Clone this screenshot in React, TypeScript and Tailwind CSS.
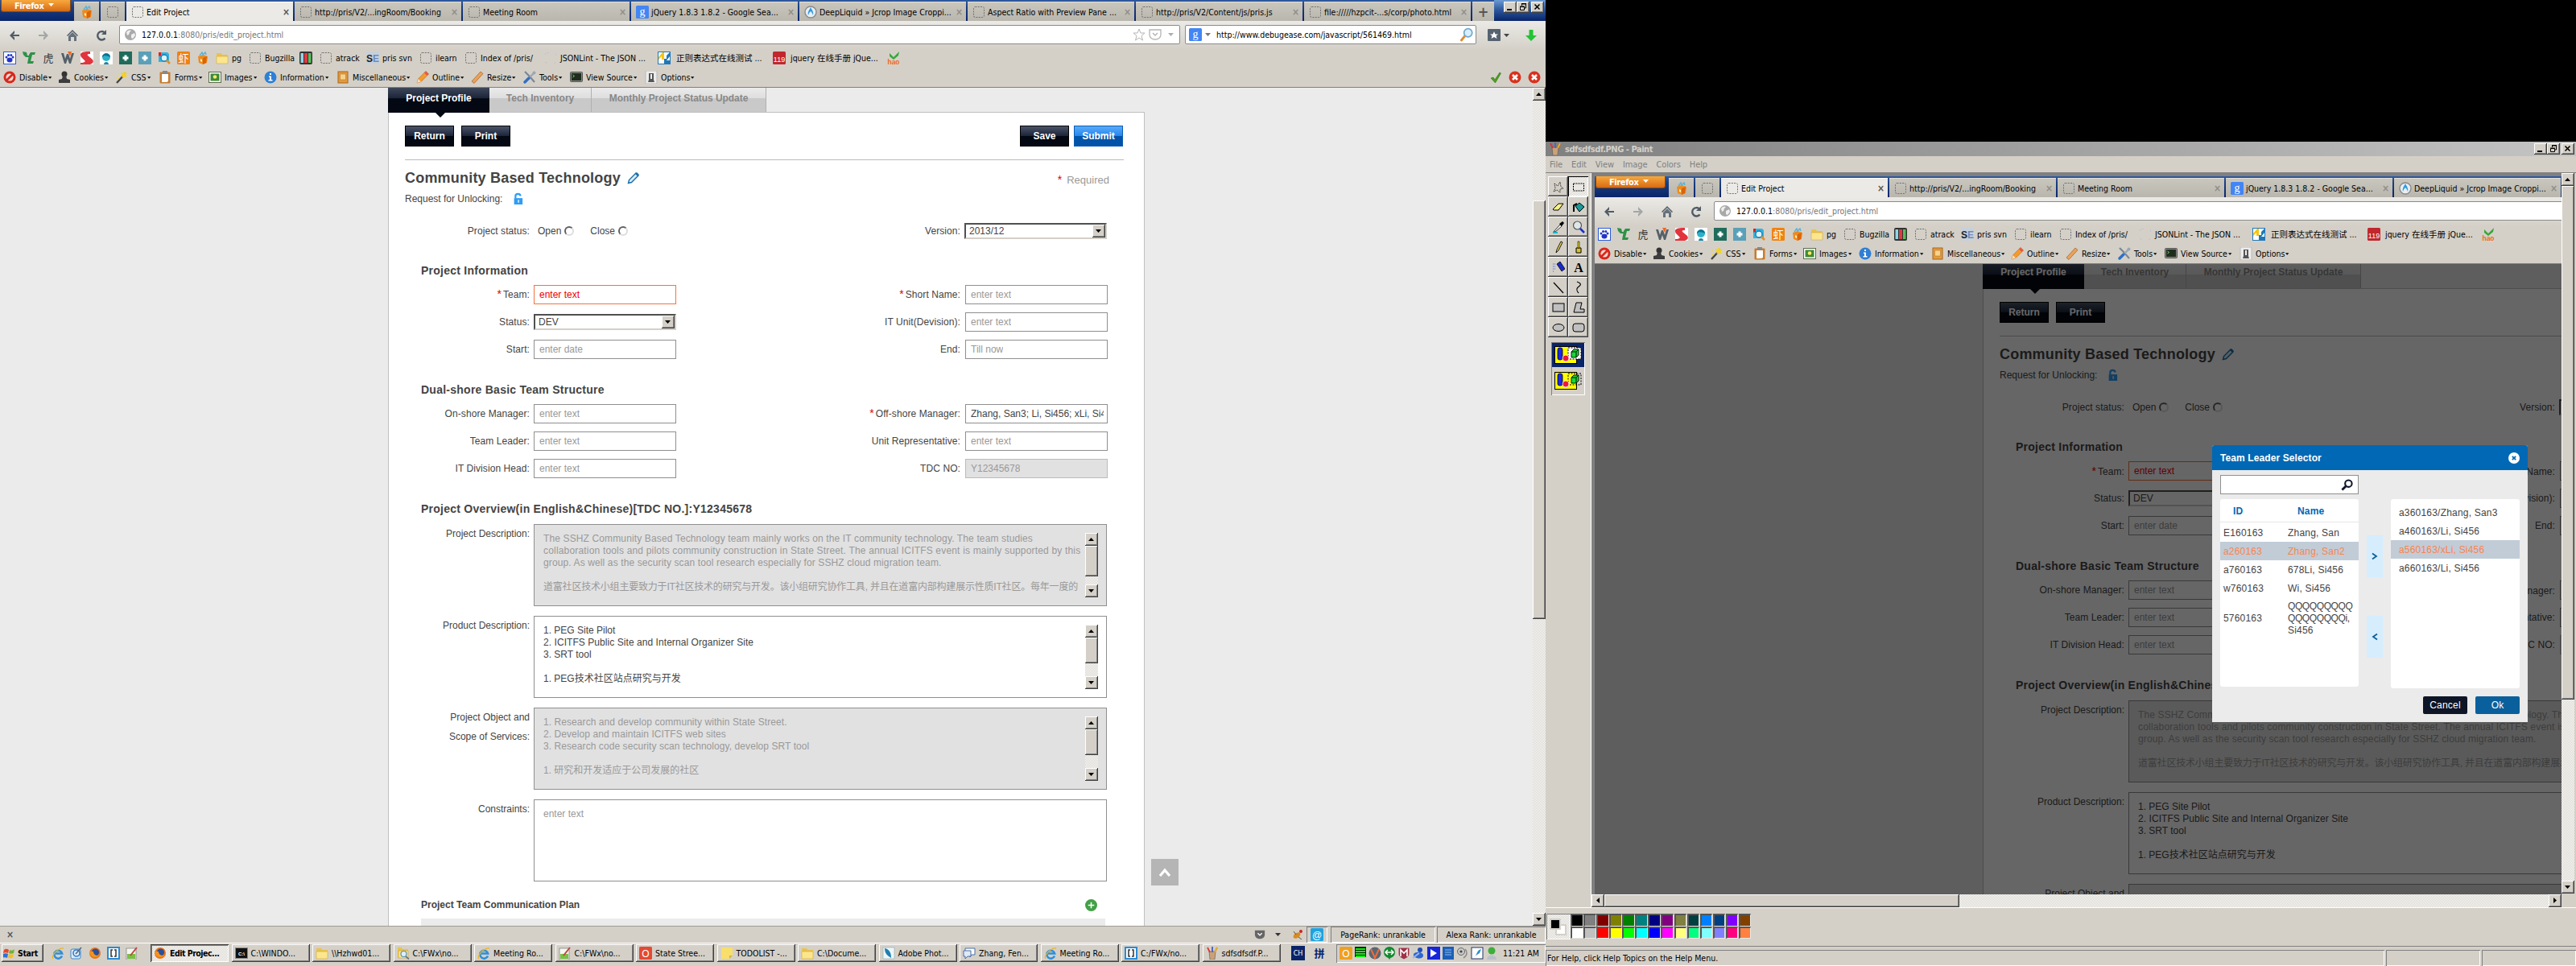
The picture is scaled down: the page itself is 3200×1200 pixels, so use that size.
import React from "react";

const ui = "font-['DejaVu_Sans_Condensed','DejaVu_Sans','Noto_Sans_CJK_SC',sans-serif] [font-stretch:condensed]";
const arial = "font-['Liberation_Sans','Noto_Sans_CJK_SC',sans-serif]";
const raised = "bg-[#d4d0c8] shadow-[inset_-1px_-1px_0_#404040,inset_1px_1px_0_#ffffff,inset_-2px_-2px_0_#808080]";
const sunken = "shadow-[inset_1px_1px_0_#808080,inset_-1px_-1px_0_#ffffff]";
const checker = "bg-[#eae8e4] bg-[repeating-conic-gradient(#d4d0c8_0_25%,#ffffff_0_50%)] bg-[length:2px_2px]";

/* ---------- icons ---------- */

type IconProps = { children: React.ReactNode; className?: string };
const I = ({ children, className = "size-4" }: IconProps) => (
  <svg viewBox="0 0 16 16" className={"shrink-0 " + className}>{children}</svg>
);

const Dashed = ({ faint = false }: { faint?: boolean }) => (
  <I><rect x="1.5" y="1.5" width="13" height="13" rx="2" fill="none" stroke={faint ? "#b9bfd0" : "#6f6f6f"} strokeDasharray={faint ? "2 9" : "2 1.3"} /></I>
);
const Google = () => (
  <I><rect width="16" height="16" rx="1.5" fill="#4285f4" /><text x="8" y="12" fontSize="14" textAnchor="middle" fill="#fff" fontFamily="Liberation Serif">g</text></I>
);
const Drop = () => (
  <I><circle cx="8" cy="8" r="7" fill="#e8eef2" stroke="#8a8a8a" strokeWidth="1.4" /><path d="M8 2c2 4 4 6 3 10-1-3-2-4-3-5-1 1-2 2-3 5-1-4 1-6 3-10z" fill="#2e9be0" /></I>
);
const BoxFox = () => (
  <I><path d="M2 6l6-2 6 2-1 8-5 2-5-2z" fill="#f08a1c" /><path d="M8 8l5-2-1 8-4 2z" fill="#d9640a" /><path d="M4 5l3-4 1 3 3-3 1 3" fill="none" stroke="#5fb4dc" strokeWidth="1.6" /><path d="M5 9l2 1v3l-2-1z" fill="#fff2c0" /></I>
);
const Globe = () => (
  <I><circle cx="8" cy="8" r="7" fill="#a9a9a9" /><path d="M3 5c2-3 5-3 6-2l-2 2-1 3-2 1zM9 8l4-2 1 3-3 4-2-1z" fill="#f0f0f0" /></I>
);
const Arrow = ({ right = false }: { right?: boolean }) => (
  <I><path d={right ? "M8 2l6 6-6 6v-3.500l2-1.500H2V7h8L8 5.500z" : "M8 2L2 8l6 6v-3.500L6 9h8V7H6l2-1.500z"} fill={right ? "#a3a6a8" : "#4f5b66"} /></I>
);
const Home = () => (
  <I><path d="M8 1L1 8l1 1 6-6 6 6 1-1z" fill="#4f5b66" /><path d="M3 9l5-5 5 5v6h-3v-5H6v5H3z" fill="#65717c" /></I>
);
const Reload = () => (
  <I><path d="M12.500 11.500A5.200 5.200 0 1 1 12 4.500" fill="none" stroke="#4f5b66" strokeWidth="2.400" /><path d="M14 1v6H8z" fill="#4f5b66" /></I>
);
const Paw = () => (
  <I><rect x=".5" y=".5" width="15" height="15" fill="#fff" stroke="#2a5bd7" /><ellipse cx="8" cy="10.500" rx="3.500" ry="3" fill="#2334c8" /><circle cx="4" cy="7" r="1.500" fill="#2334c8" /><circle cx="6.500" cy="4.500" r="1.500" fill="#2334c8" /><circle cx="9.800" cy="4.500" r="1.500" fill="#2334c8" /><circle cx="12" cy="7" r="1.500" fill="#2334c8" /></I>
);
const GreenMark = () => (
  <I><path d="M0 0l5 1 1 4 3 0-1 2-4 0-3-3zM8 4l2-3h6l-1 3h-3l-2 8 4 0-1 3H6z" fill="#2e9148" /></I>
);
const Glyph = ({ ch, bg, fg = "#fff", size = 13 }: { ch: string; bg: string; fg?: string; size?: number }) => (
  <I><rect width="16" height="16" rx="1.500" fill={bg} /><text x="8" y="12.700" fontSize={size} textAnchor="middle" fill={fg} fontFamily="Liberation Sans, Noto Sans CJK SC">{ch}</text></I>
);
const WMark = () => (
  <I><path d="M0 2h3l2 7 2-6h2l2 6 2-7h3l-4 13H10L8 9l-2 6H4z" fill="#566069" /><path d="M8 0h5l-2 6z" fill="#f26522" /></I>
);
const SMark = () => (
  <I><rect width="16" height="16" fill="#fff" /><path d="M0 3C2 0 6 0 12 0v3C9 3 8 4 9 5l6 5c2 3 0 5-3 6H0v-2c4 0 7-1 5-3L1 7C0 6 0 4 0 3z" fill="#e1343d" /></I>
);
const Head = () => (
  <I><rect width="16" height="16" fill="#fff" /><circle cx="8" cy="7" r="5" fill="#2cb2c8" /><path d="M3 7c0-6 10-6 10 0l-2-1-5-1z" fill="#0d6f8d" /><path d="M5 16c0-4 6-4 6 0z" fill="#1b87a4" /></I>
);
const Plus = ({ c }: { c: string }) => (
  <I><rect width="16" height="16" fill={c} /><path d="M6.500 4.500h3v2h2v3h-2v2h-3v-2h-2v-3h2z" fill="#fff" /></I>
);
const BookLens = () => (
  <I><path d="M1 1h11l2 2v10H1z" fill="#33b2e0" /><path d="M1 1h3v5L2.500 5 1 6z" fill="#d22" /><circle cx="8" cy="8" r="4" fill="#dff4ff" stroke="#0b7fb0" strokeWidth="1.300" /><path d="M11 11l4 4" stroke="#f08a1c" strokeWidth="2.500" /></I>
);
const Folder = () => (
  <I><path d="M1 2h6l1 2h7v11H1z" fill="#e9c34f" /><path d="M1 6h14v9H1z" fill="#fbe68d" stroke="#d5a93a" strokeWidth=".6" /></I>
);
const FolderLens = () => (
  <I><path d="M1 1h5l1 2h7v11H1z" fill="#e9c34f" /><path d="M2 5h12v9H2z" fill="#fbe68d" stroke="#c99a2a" strokeWidth=".6" /><circle cx="8.500" cy="9" r="3.500" fill="#d9f0ff" stroke="#5b8fb5" strokeWidth="1.200" /><path d="M11 12l4 3.500" stroke="#6d7680" strokeWidth="1.800" /></I>
);
const Bars = () => (
  <I><rect width="16" height="16" rx="2" fill="#333" /><rect x="1.500" y="2" width="3.500" height="12" fill="#8fd7e8" /><rect x="6" y="2" width="4" height="12" fill="#e2383f" /><rect x="11" y="2" width="3.500" height="12" fill="#5bbd5e" /></I>
);
const SE = () => (
  <I><rect width="16" height="16" fill="#c7d0dc" /><text x="0" y="12.500" fontSize="12" fontWeight="700" fill="#222" fontFamily="Liberation Sans">S</text><text x="8" y="12.500" fontSize="12" fontWeight="700" fill="#6b8bbd" fontFamily="Liberation Sans">E</text></I>
);
const Stripe = () => (
  <I><rect x=".5" y=".5" width="15" height="15" fill="#fff" stroke="#1e78b8" /><path d="M1 7l5-6h2v9H5V6L1 10z" fill="#f6c40f" /><path d="M8 15V9h3V5l4-4v5l-4 5h4v4z" fill="#1e78b8" /></I>
);
const Hao = () => (
  <I><path d="M3 2l5 5 7-7-1 5-6 5-5-4z" fill="#35a839" /><text x="8" y="15.500" fontSize="8.500" fontWeight="700" textAnchor="middle" fill="#f26a1b" fontFamily="Liberation Sans">hao</text></I>
);
const NoEntry = () => (
  <I><circle cx="8" cy="8" r="7.500" fill="#d9271c" /><circle cx="8" cy="8" r="4.600" fill="#f2d8d0" /><path d="M3.500 12.500l9-9" stroke="#d9271c" strokeWidth="2.600" /></I>
);
const Stamp = () => (
  <I><circle cx="8" cy="4" r="3.500" fill="#333" /><path d="M6 6h4l1 4 4 1v4H1v-4l4-1z" fill="#3d3d3d" /></I>
);
const Wand = () => (
  <I><path d="M2 15L13 3" stroke="#444" strokeWidth="2.400" /><path d="M11 1l1 2 3 0-2 2 1 3-3-1-2 1 0-3-2-2h3zM3 4l1 1M5 10l-3-1" fill="#f3d22c" stroke="#f3d22c" /></I>
);
const Clip = () => (
  <I><rect x="1.500" y="1.500" width="13" height="14" rx="1" fill="#c77b2f" /><path d="M4 4h8v9l-2 1H4z" fill="#fff" /><rect x="5" y="0" width="6" height="3.500" fill="#888" /></I>
);
const Pic = () => (
  <I><rect x=".5" y="1.500" width="15" height="13" fill="#fff" stroke="#5a6b4b" /><rect x="2.500" y="3.500" width="11" height="9" fill="#3f8a35" /><circle cx="8" cy="7.500" r="2.300" fill="#fbe96b" /></I>
);
const Info = () => (
  <I><circle cx="8" cy="8" r="7.500" fill="#2f7fd6" /><path d="M7 3h2v2H7zM6 6.500h3V11h1.500v1.500h-5V11H7V8H6z" fill="#fff" /></I>
);
const Scroll = () => (
  <I><rect x="2" y="1" width="12" height="14" fill="#e39b3d" stroke="#a9641a" /><path d="M4.500 4h7v7h-7z" fill="#f7d28b" stroke="#b8752a" strokeWidth=".6" /></I>
);
const Pencil = () => (
  <I><path d="M1 15l1.500-5L12 .5 15.500 4 6 13.500z" fill="#f59b2c" stroke="#b55a12" strokeWidth=".6" /><path d="M12 .5L15.500 4l-2 2L10 2.500z" fill="#e4574b" /><path d="M1 15l1.500-5L6 13.500z" fill="#f6dfb5" /></I>
);
const Ruler = () => (
  <I><path d="M1 13L12 1l3 2.500L4 15.500z" fill="#e8a35b" stroke="#b1652a" strokeWidth=".8" /></I>
);
const Tools = () => (
  <I><path d="M2 1l6 6 6 7" stroke="#7a8796" strokeWidth="2.200" fill="none" /><path d="M14 2L6 10" stroke="#9ba6b3" strokeWidth="2.400" /><path d="M7 9l-5 5" stroke="#2f6fc4" strokeWidth="3.400" strokeLinecap="round" /><circle cx="13.500" cy="2.500" r="2" fill="#9ba6b3" /></I>
);
const Term = () => (
  <I><rect x=".5" y="1.500" width="15" height="12" rx="1" fill="#888c84" stroke="#555" /><rect x="2" y="3" width="12" height="9" fill="#1f2d1e" /><path d="M3.500 5l2 1.500-2 1.500" stroke="#6ee25c" fill="none" /></I>
);
const Switch = () => (
  <I><rect x="1" y="0" width="14" height="16" fill="#ececec" stroke="#b9b9b9" /><path d="M5 3h6v8l1 3H4l1-3z" fill="#555" /><path d="M7 4h2v6H7z" fill="#eee" /></I>
);
const Check = () => (
  <I><path d="M2 9l3-1 2 3 6-9 1.500 1-7 12z" fill="#4ba021" stroke="#2f7410" strokeWidth=".6" /></I>
);
const RedX = () => (
  <I><circle cx="8" cy="8" r="7.500" fill="#d8321e" /><path d="M5 5l6 6M11 5l-6 6" stroke="#fff" strokeWidth="2.600" /></I>
);
const IE = () => (
  <I><path d="M13 11.500A5 5 0 1 1 13.200 8.500H4" fill="none" stroke="#2c8fdc" strokeWidth="2.500" /><path d="M2 15C-1 11 9 1 15 2" fill="none" stroke="#f0b323" strokeWidth="1.400" /></I>
);
const FF = () => (
  <I><circle cx="8" cy="8" r="7" fill="#e8741a" /><circle cx="8.500" cy="7" r="4.600" fill="#2a4f9d" /><path d="M1 6c1 8 9 9 13 4-4 2-8 0-8-4z" fill="#f3941e" /></I>
);
const Brackets = () => (
  <I><rect width="16" height="16" fill="#2a8ad4" /><rect x="2" y="2" width="12" height="12" fill="#fff" /><path d="M7 4H5v8h2M9 4h2v8H9" fill="none" stroke="#333" strokeWidth="1.500" /></I>
);
const Notepad = () => (
  <I><rect x="1" y="2" width="12" height="14" fill="#f4f7ef" stroke="#777" strokeWidth=".7" /><path d="M2 9h10v6H2z" fill="#79c142" /><path d="M6 11L14 1" stroke="#c24343" strokeWidth="2" /></I>
);
const Recycle = () => (
  <I><rect x="1" y="3" width="12" height="12" rx="2" fill="#dcebf8" stroke="#3f86cb" /><circle cx="8" cy="8" r="4" fill="none" stroke="#2f7fd0" strokeWidth="1.600" /><path d="M7 9l7-8" stroke="#5a6b7b" strokeWidth="1.600" /></I>
);
const WinFlag = () => (
  <I><path d="M1 4c2-2 4-1 6 0L6 8C4 7 2 7 0 8z" fill="#e8472b" /><path d="M8 4c2 1 4 1 6-1l-1 5c-2 1-4 1-6 0z" fill="#6db33a" /><path d="M0 9c2-1 4-1 6 0l-1 5c-2-1-4-1-6 0z" fill="#2f6fd8" /><path d="M7 9c2 1 4 1 6 0l-1 4c-2 2-4 1-6 1z" fill="#f4c020" /></I>
);
const Cmd = () => (
  <I><rect x=".5" y="1.500" width="15" height="13" fill="#111" stroke="#888" /><text x="8" y="10.500" fontSize="6" textAnchor="middle" fill="#fff" fontWeight="700" fontFamily="Liberation Sans">C:\</text></I>
);
const Note = () => <I><path d="M1 1h14v10l-4 4H1z" fill="#f8de6b" /><path d="M15 11h-4v4z" fill="#d6b53b" /></I>;
const Feather = () => (
  <I><rect x="1" y="1" width="14" height="14" fill="#eef6fa" stroke="#8aa" strokeWidth=".6" /><path d="M3 2c6 1 8 6 8 12C6 11 3 8 3 2z" fill="#1f7fae" /></I>
);
const Chat = () => (
  <I><path d="M3 2h12v8h-4l-2 3V10H3z" fill="#fff" stroke="#4a6fa5" /><path d="M1 5h9v7H6l-3 3v-3H1z" fill="#dfe9f6" stroke="#4a6fa5" /></I>
);
const PaintCup = () => (
  <I><path d="M4 6h8l-1 10H5z" fill="#c9a27a" stroke="#555" strokeWidth=".6" /><path d="M5 7L2 1M8 7V0M11 7l3-6" stroke="#d33" strokeWidth="1.700" /><path d="M8 7V0" stroke="#3b6fd0" strokeWidth="1.700" /><path d="M11 7l3-6" stroke="#e7b721" strokeWidth="1.700" /></I>
);
const Lens = ({ className = "size-4" }: { className?: string }) => (
  <I className={className}><circle cx="9.500" cy="6" r="4.500" fill="#d7efff" stroke="#6fa8cf" strokeWidth="1.500" /><path d="M6 9.500L1.500 15" stroke="#e08a2d" strokeWidth="2.600" /></I>
);
const Tri = ({ dir = "d", className = "" }: { dir?: "d" | "u" | "l" | "r"; className?: string }) => (
  <svg viewBox="0 0 8 8" className={"size-2 shrink-0 " + className}>
    <path d={dir === "d" ? "M0 2h7L3.500 6z" : dir === "u" ? "M0 6h7L3.500 2z" : dir === "l" ? "M6 0v7L2 3.500z" : "M2 0v7l4-3.500z"} fill="currentColor" />
  </svg>
);

/* ---------- shared widgets ---------- */

const WinButtons = () => (
  <div className="flex h-[14px] shrink-0">
    <div className={"flex w-4 items-end pb-[3px] pl-1 " + raised}><div className="h-0.5 w-1.5 bg-black" /></div>
    <div className={"mr-0.5 w-4 " + raised}>
      <svg viewBox="0 0 16 14" className="h-[14px] w-4"><path d="M6.500 5V3h5v5h-2M4.500 6.500h5v4h-5zM4 6h6M6 2.500h6" fill="none" stroke="#000" /></svg>
    </div>
    <div className={"w-4 " + raised}>
      <svg viewBox="0 0 16 14" className="h-[14px] w-4"><path d="M4.500 3.500l6 6M10.500 3.500l-6 6" stroke="#000" strokeWidth="1.600" /></svg>
    </div>
  </div>
);

const VScroll = ({ className, thumb, before = "h-0" }: { className: string; thumb: string; before?: string }) => (
  <div className={"flex w-4 shrink-0 flex-col " + checker + " " + className}>
    <div className={"flex h-4 shrink-0 items-center justify-center text-black " + raised}><Tri dir="u" /></div>
    <div className={"shrink-0 " + before} />
    <div className={"shrink-0 " + raised + " " + thumb} />
    <div className="grow" />
    <div className={"flex h-4 shrink-0 items-center justify-center text-black " + raised}><Tri /></div>
  </div>
);

/* ---------- browser chrome ---------- */

const tabs: { icon: React.ReactNode; label: string; active?: boolean }[] = [
  { icon: <Dashed />, label: "Edit Project", active: true },
  { icon: <Dashed />, label: "http://pris/V2/...ingRoom/Booking" },
  { icon: <Dashed />, label: "Meeting Room" },
  { icon: <Google />, label: "jQuery 1.8.3 1.8.2 - Google Sea..." },
  { icon: <Drop />, label: "DeepLiquid » Jcrop Image Croppi..." },
  { icon: <Dashed />, label: "Aspect Ratio with Preview Pane ..." },
  { icon: <Dashed />, label: "http://pris/V2/Content/js/pris.js" },
  { icon: <Dashed />, label: "file://///hzpcit-...s/corp/photo.html" },
];

const bookmarks: { w: string; icon: React.ReactNode; label?: string; gap?: string }[] = [
  { w: "w-6", icon: <Paw /> },
  { w: "w-6", icon: <GreenMark /> },
  { w: "w-6", icon: <Glyph ch="虎" bg="none" fg="#333" /> },
  { w: "w-6", icon: <WMark /> },
  { w: "w-6", icon: <SMark /> },
  { w: "w-6", icon: <Head /> },
  { w: "w-6", icon: <Plus c="#1f6b5c" /> },
  { w: "w-6", icon: <Plus c="#5aa0b8" /> },
  { w: "w-6", icon: <BookLens /> },
  { w: "w-6", icon: <Glyph ch="虾" bg="#f0820f" /> },
  { w: "w-6", icon: <BoxFox /> },
  { w: "w-[41px]", icon: <Folder />, label: "pg" },
  { w: "w-[63px]", icon: <Dashed />, label: "Bugzilla" },
  { w: "w-[25px]", icon: <Bars /> },
  { w: "w-[58px]", icon: <Dashed />, label: "atrack" },
  { w: "w-[66px]", icon: <SE />, label: "pris svn" },
  { w: "w-[56px]", icon: <Dashed />, label: "ilearn" },
  { w: "w-[99px]", icon: <Dashed />, label: "Index of /pris/" },
  { w: "w-[141px]", icon: <Dashed faint />, label: "JSONLint - The JSON ..." },
  { w: "w-[143px]", icon: <Stripe />, label: "正则表达式在线测试 ...", gap: "gap-[7px]" },
  { w: "w-[142px]", icon: <Glyph ch="119" bg="#c1272d" size={9} />, label: "jquery 在线手册 jQue...", gap: "gap-1.5" },
  { w: "w-4", icon: <Hao /> },
];

const devItems: { w: string; icon: React.ReactNode; label: string }[] = [
  { w: "w-[68px]", icon: <NoEntry />, label: "Disable" },
  { w: "w-[71px]", icon: <Stamp />, label: "Cookies" },
  { w: "w-[54px]", icon: <Wand />, label: "CSS" },
  { w: "w-[62px]", icon: <Clip />, label: "Forms" },
  { w: "w-[69px]", icon: <Pic />, label: "Images" },
  { w: "w-[90px]", icon: <Info />, label: "Information" },
  { w: "w-[99px]", icon: <Scroll />, label: "Miscellaneous" },
  { w: "w-[68px]", icon: <Pencil />, label: "Outline" },
  { w: "w-[65px]", icon: <Ruler />, label: "Resize" },
  { w: "w-[58px]", icon: <Tools />, label: "Tools" },
  { w: "w-[93px]", icon: <Term />, label: "View Source" },
  { w: "w-[70px]", icon: <Switch />, label: "Options" },
];

const idleTab = "bg-linear-to-b from-[#c9c6be] to-[#b9b6ae] border-t border-[#e2e0da]";

const Chrome = () => (
  <div className={"h-[109px] shrink-0 overflow-hidden text-[10.5px] leading-none whitespace-nowrap text-black " + ui}>
    <div className="flex h-[26px] items-end bg-linear-to-b from-[#2f5aa0] via-[#1c3f80] via-30% to-[#0a246a]">
      <div className="ml-px flex h-[15px] w-[87px] items-center gap-1.5 self-start rounded-b-[3px] border border-t-0 border-[#8a4a10] bg-linear-to-b from-[#f6a83c] to-[#d86a10] pl-4 text-[11px] font-bold tracking-[-0.4px] text-white">
        Firefox <Tri className="mt-[-2px]" />
      </div>
      <div className={"ml-1 flex h-6 w-[31px] items-center justify-center " + idleTab}><BoxFox /></div>
      <div className={"ml-0.5 flex h-6 w-[30px] items-center justify-center " + idleTab}><Dashed /></div>
      {tabs.map((t) => (
        <div key={t.label} className={"ml-0.5 flex h-6 w-[207px] items-center gap-[3px] pr-1 pl-1.5 " + (t.active ? "border-t border-white bg-[#ebeae6]" : idleTab)}>
          {t.icon}
          <span className="grow leading-4">{t.label}</span>
          <span className={"w-[9px] text-[12px] font-bold " + (t.active ? "text-[#555]" : "text-[#8f8d88]")}>×</span>
        </div>
      ))}
      <div className={"ml-0.5 flex h-6 w-[27px] items-center justify-center text-[18px] font-bold text-[#555] " + idleTab}>+</div>
      <div className="flex h-full grow items-start justify-end bg-linear-to-b from-[#6c9bd2] via-[#2a549a] to-[#0a246a] pt-0.5 pr-0.5"><WinButtons /></div>
    </div>
    <div className="flex h-[36px] items-center bg-linear-to-b from-[#ebeae6] to-[#d4d0c8] pl-2.5">
      <div className="flex w-[138px] gap-5 pb-px"><Arrow /><Arrow right /><Home /><Reload /></div>
      <div className="mt-1 mb-1.5 flex h-6 w-[1318px] items-center rounded-[2px] border border-[#8b8b8b] bg-white pl-[5px]">
        <Globe />
        <span className="ml-1.5 grow text-[#777]"><span className="text-black">127.0.0.1</span>:8080/pris/edit_project.html</span>
        <I><path d="M8 1l2 5h5l-4 3.500 1.500 5.500L8 12l-4.500 3L5 9.500 1 6h5z" fill="#fff" stroke="#b5b5b5" /></I>
        <I className="ml-1 size-4"><path d="M1 2h14v6c0 8-14 8-14 0z" fill="#fff" stroke="#b5b5b5" strokeWidth="1.300" /><path d="M5 6l3 3 3-3" stroke="#b5b5b5" fill="none" strokeWidth="1.500" /></I>
        <Tri className="mr-1.5 ml-2 text-[#a8aeb8]" />
      </div>
      <div className="mt-1 mb-1.5 ml-1.5 flex h-6 w-[362px] items-center rounded-[2px] border border-[#8b8b8b] bg-white pl-1">
        <Google /><Tri className="ml-1 text-[#777]" />
        <span className="ml-1.5 grow">http://www.debugease.com/javascript/561469.html</span>
        <Lens className="mr-0.5 size-[18px]" />
      </div>
      <div className="ml-3.5 flex items-center gap-1 text-[#444]">
        <I><rect width="16" height="15" rx="1" fill="#566270" /><path d="M8 3l1.500 3.500H13l-2.500 2 1 3.500L8 10l-3.500 2 1-3.500L3 6.500h3.500z" fill="#fff" /></I>
        <Tri />
      </div>
      <I className="ml-[18px] size-4"><path d="M5.500 1h5v7H15l-7 7-7-7h4.500z" fill="#22c335" /></I>
    </div>
    <div className="flex h-[22px] items-center bg-[#d4d0c8] pb-0.5 pl-1">
      {bookmarks.map((b, i) => (
        <div key={i} className={"flex shrink-0 items-center " + (b.gap ?? "gap-1") + " " + b.w}>{b.icon}{b.label && <span>{b.label}</span>}</div>
      ))}
    </div>
    <div className="flex h-[25px] items-center border-b border-[#808080] bg-[#d4d0c8] pl-1">
      {devItems.map((d) => (
        <div key={d.label} className={"flex shrink-0 items-center gap-1 " + d.w}>{d.icon}<span>{d.label}</span><Tri className="-ml-[3px] !size-[5px]" /></div>
      ))}
      <div className="flex grow items-center justify-end gap-2 pr-1.5"><Check /><RedX /><RedX /></div>
    </div>
  </div>
);

/* ---------- project form ---------- */

const Btn = ({ children, blue }: { children: string; blue?: boolean }) => (
  <div className={"flex h-[26px] w-[61px] items-center justify-center border text-[12px] font-bold text-white " + (blue
    ? "border-[#0a5cb0] bg-linear-to-b from-[#5aaaf8] from-0% via-[#1f86f0] via-50% to-[#0053a8] to-52%"
    : "border-black bg-linear-to-b from-[#4b5468] via-[#1b2438] via-50% to-[#030812] to-52%")}>{children}</div>
);

const Label = ({ children, req, w }: { children: string; req?: boolean; w: string }) => (
  <div className={"shrink-0 text-right tracking-[0.08px] " + w}>{req && <span className="mr-0.5 text-[14px] leading-none text-[#e00000]">*</span>}{children}</div>
);

const Input = ({ value, kind }: { value: string; kind?: "error" | "filled" | "off" }) => (
  <div className={"flex h-6 w-[177px] shrink-0 items-center overflow-hidden border pl-[6px] pr-1 whitespace-nowrap " + (
    kind === "error" ? "border-[#f4743b] bg-white text-[#f00000]"
      : kind === "filled" ? "border-[#8f8f8f] bg-white text-[#444]"
        : kind === "off" ? "border-[#bbb] bg-[#e1e1e1] text-[#999]"
          : "border-[#8f8f8f] bg-white text-[#999]")}><span className="overflow-hidden">{value}</span></div>
);

const Select = ({ value }: { value: string }) => (
  <div className="flex h-5 w-[177px] shrink-0 items-center border-2 border-t-[#505050] border-r-[#d4d0c8] border-b-[#d4d0c8] border-l-[#505050] bg-white pl-1">
    <span className="grow">{value}</span>
    <div className={"flex h-4 w-4 items-center justify-center text-black " + raised}><Tri /></div>
  </div>
);

const Row = ({ a, b }: { a: [string, React.ReactNode, boolean?]; b: [string, React.ReactNode, boolean?] }) => (
  <div className="flex h-[34px] items-center">
    <Label w="w-[155px]" req={a[2]}>{a[0]}</Label><div className="ml-[5px]">{a[1]}</div>
    <Label w="w-[353px]" req={b[2]}>{b[0]}</Label><div className="ml-1.5">{b[1]}</div>
  </div>
);

type Line = string | { text: string; fit: string };

const Area = ({ label, lines, off, thumb }: { label: string[]; lines: Line[]; off?: boolean; thumb?: string }) => (
  <div className="mb-3 flex h-[102px]">
    <div className="w-[155px] text-right leading-6">{label.map((l) => <div key={l}>{l}</div>)}</div>
    <div className={"ml-[5px] flex w-[712px] justify-between overflow-hidden border border-[#8f8f8f] pt-2.5 pr-2.5 pl-[11px] leading-[15px] whitespace-nowrap " + (off ? "bg-[#e1e1e1] text-[#999]" : thumb ? "bg-white" : "bg-white text-[#999]")}>
      <div>{lines.map((l, i) => typeof l === "string"
        ? <div key={i} className="h-[15px]">{l}</div>
        : <div key={i} className={"h-[15px] " + l.fit}>{l.text}</div>)}</div>
      {thumb && <VScroll className="h-20" thumb={thumb} />}
    </div>
  </div>
);

const H = ({ children, mt }: { children: string; mt: string }) => (
  <h2 className={"ml-5 flex h-5 items-center text-[14px] font-bold tracking-[0.25px] text-[#444] " + mt}>{children}</h2>
);

const Radio = () => <span className="inline-block size-3 rounded-full border-2 border-[#606060] border-r-[#ddd] border-b-[#ddd] bg-white" />;

const Form = () => (
  <div className={"h-[1041px] w-[1904px] overflow-hidden bg-[#ebebeb] pl-[482px] text-[12px] text-[#444] " + arial}>
    <div className="relative flex h-[31px] w-[940px] border-b border-[#c0c0c0] text-[12px] font-bold text-[#888]">
      <div className="flex h-[31px] w-[126px] shrink-0 justify-center bg-linear-to-b from-[#3f475a] via-[#1b2438] via-42% to-[#030812] to-44% pt-1 text-white">Project Profile</div>
      <div className="flex w-[127px] shrink-0 justify-center border-r border-[#b0b0b0] bg-linear-to-b from-[#ebebeb] via-[#dedede] via-42% to-[#c9c9c9] to-44% pt-1">Tech Inventory</div>
      <div className="flex w-[217px] shrink-0 justify-center border-r border-[#b0b0b0] bg-linear-to-b from-[#ebebeb] via-[#dedede] via-42% to-[#c9c9c9] to-44% pt-1 tracking-[-0.05px]">Monthly Project Status Update</div>
      <div className="absolute top-[31px] left-[59px] border-x-[6px] border-t-[6px] border-x-transparent border-t-[#030812]" />
    </div>
    <div className="h-[1010px] w-[940px] border-x border-[#c0c0c0] bg-white pl-5">
      <div className="flex pt-4">
        <Btn>Return</Btn><div className="w-[9px]" /><Btn>Print</Btn>
        <div className="w-[633px]" /><Btn>Save</Btn><div className="w-1.5" /><Btn blue>Submit</Btn>
      </div>
      <div className="mt-4 h-px w-[893px] bg-[#bbb]" />
      <div className="mt-[7px] flex h-[30px] items-center">
        <h1 className="text-[18px] font-bold tracking-[0.2px]">Community Based Technology</h1>
        <I className="ml-2 size-4"><path d="M1.500 14.500l1-4L11 2l3 3-8.500 8.500z" fill="#d6ecfa" stroke="#1a6fa8" strokeWidth="1.400" /><path d="M10 3l2-2 3 3-2 2z" fill="#1a6fa8" /></I>
        <div className="mt-1.5 mr-[43px] grow text-right text-[13px] text-[#999]"><span className="mr-1.5 text-[14px] leading-none text-[#e00000]">*</span>Required</div>
      </div>
      <div className="mt-px flex h-5 items-center">Request for Unlocking:
        <I className="ml-3 h-4 w-3.5"><path d="M3 7h12v9H3z" fill="#2f9df4" /><path d="M5 7V4c0-4 7-4 7 0" fill="none" stroke="#2f9df4" strokeWidth="2.500" /><path d="M8.500 9.500h1.500v4H8.500z" fill="#fff" /></I>
      </div>
      <div className="mt-[13px] flex h-[34px] items-center">
        <Label w="w-[155px]">Project status:</Label>
        <div className="ml-2.5 flex w-[182px] items-center gap-1">Open <Radio /><span className="ml-4">Close</span> <Radio /></div>
        <Label w="w-[343px]">Version:</Label><div className="ml-[5px]"><Select value="2013/12" /></div>
      </div>
      <H mt="mt-[22px]">Project Information</H>
      <div className="mt-[3px]">
        <Row a={["Team:", <Input value="enter text" kind="error" />, true]} b={["Short Name:", <Input value="enter text" />, true]} />
        <Row a={["Status:", <Select value="DEV" />]} b={["IT Unit(Devision):", <Input value="enter text" />]} />
        <Row a={["Start:", <Input value="enter date" />]} b={["End:", <Input value="Till now" />]} />
      </div>
      <H mt="mt-[23px]">Dual-shore Basic Team Structure</H>
      <div className="mt-[3px]">
        <Row a={["On-shore Manager:", <Input value="enter text" />]} b={["Off-shore Manager:", <Input value="Zhang, San3; Li, Si456; xLi, Si456" kind="filled" />, true]} />
        <Row a={["Team Leader:", <Input value="enter text" />]} b={["Unit Representative:", <Input value="enter text" />]} />
        <Row a={["IT Division Head:", <Input value="enter text" />]} b={["TDC NO:", <Input value="Y12345678" kind="off" />]} />
      </div>
      <H mt="mt-[23px]">Project Overview(in English&Chinese)[TDC NO.]:Y12345678</H>
      <div className="mt-[9px]">
        <Area off thumb="h-[38px]" label={["Project Description:"]} lines={[
          { text: "The SSHZ Community Based Technology team mainly works on the IT community technology. The team studies", fit: "tracking-[0.13px]" },
          { text: "collaboration tools and pilots community construction in State Street. The annual ICITFS event is mainly supported by this", fit: "tracking-[0.18px]" },
          { text: "group. As well as the security scan tool research especially for SSHZ cloud migration team.", fit: "tracking-[0.12px]" },
          "",
          { text: "道富社区技术小组主要致力于IT社区技术的研究与开发。该小组研究协作工具, 并且在道富内部构建展示性质IT社区。每年一度的", fit: "tracking-[-0.2px]" },
        ]} />
        <Area thumb="h-8" label={["Product Description:"]} lines={["1. PEG Site Pilot", { text: "2. ICITFS Public Site and Internal Organizer Site", fit: "tracking-[0.06px]" }, "3. SRT tool", "", "1. PEG技术社区站点研究与开发"]} />
        <Area off thumb="h-8" label={["Project Object and", "Scope of Services:"]} lines={[
          { text: "1. Research and develop community within State Street.", fit: "tracking-[0.07px]" },
          { text: "2. Develop and maintain ICITFS web sites", fit: "tracking-[0.07px]" },
          { text: "3. Research code security scan technology, develop SRT tool", fit: "tracking-[0.07px]" },
          "",
          "1. 研究和开发适应于公司发展的社区",
        ]} />
        <Area label={["Constraints:"]} lines={["enter text"]} />
      </div>
      <div className="mt-[19px] ml-5 flex h-5 w-[840px] items-center justify-between">
        <h3 className="text-[12px] font-bold">Project Team Communication Plan</h3>
        <I className="size-[15px]"><circle cx="8" cy="8" r="8" fill="#43a047" /><path d="M8 4v8M4 8h8" stroke="#fff" strokeWidth="1.600" /></I>
      </div>
      <div className="mt-[7px] ml-5 h-3 w-[850px] bg-[#ebebeb]" />
    </div>
  </div>
);

/* ---------- leader dialog ---------- */

const people = [
  ["E160163", "Zhang, San"],
  ["a260163", "Zhang, San2"],
  ["a760163", "678Li, Si456"],
  ["w760163", "Wi, Si456"],
];
const chosen = ["a360163/Zhang, San3", "a460163/Li, Si456", "a560163/xLi, Si456", "a660163/Li, Si456"];

const LeaderDialog = () => (
  <div className={"absolute top-[334px] left-[767px] h-[344px] w-[392px] overflow-hidden rounded-t-[3px] bg-[#ebebeb] text-[12px] tracking-[0.2px] text-[#444] " + arial}>
    <div className="flex h-[31px] items-center justify-between bg-[#0068b4] px-2.5 font-bold text-white">
      <span className="tracking-[0.1px]">Team Leader Selector</span>
      <I className="size-[14px]"><circle cx="8" cy="8" r="8" fill="#fff" /><path d="M5.500 5.500l5 5M10.500 5.500l-5 5" stroke="#0068b4" strokeWidth="2" /></I>
    </div>
    <div className="flex h-[270px] px-2.5">
      <div className="w-[172px]">
        <div className="mt-1.5 flex h-6 items-center justify-end border border-[#8f8f8f] bg-white pr-1.5">
          <I className="size-[15px]"><circle cx="10" cy="6" r="4.500" fill="none" stroke="#0d1526" strokeWidth="2.200" /><path d="M6.500 9.500L1.500 14.500" stroke="#0d1526" strokeWidth="3" /></I>
        </div>
        <div className="mt-1.5 h-[233px] rounded-[3px] bg-white">
          <div className="flex h-[29px] items-center border-b border-[#e6e6e6] pt-0.5 font-bold text-[#0068b4]"><span className="w-[96px] pl-4">ID</span><span>Name</span></div>
          <div className="pt-[1px]">
            {people.map(([id, name], i) => (
              <div key={id} className={"flex h-[23px] items-center pl-1 " + (i === 1 ? "bg-[#c1ccd7] text-[#f9844f]" : "")}><span className="w-20">{id}</span><span>{name}</span></div>
            ))}
            <div className="flex h-[53px] items-center pl-1 leading-[15px]"><span className="w-20">5760163</span><span><span className="tracking-[-0.4px]">QQQQQQQQQ<br />QQQQQQQQi,</span><br />Si456</span></div>
          </div>
        </div>
      </div>
      <div className="mx-2.5 w-5">
        <div className="mt-[81px] flex h-[52px] items-center justify-center bg-[#d6edfd]"><svg viewBox="0 0 8 10" className="h-2.5 w-2"><path d="M1 1.500L6 5 1 8.500" fill="none" stroke="#0a609c" strokeWidth="1.800" /></svg></div>
        <div className="mt-12 flex h-[52px] items-center justify-center bg-[#d6edfd]"><svg viewBox="0 0 8 10" className="h-2.5 w-2"><path d="M7 1.500L2 5l5 3.500" fill="none" stroke="#0a609c" strokeWidth="1.800" /></svg></div>
      </div>
      <div className="mt-9 h-[235px] w-40 rounded-[3px] bg-white pt-[5px]">
        {chosen.map((c, i) => (
          <div key={c} className={"flex h-[23px] items-center pl-2.5 " + (i === 2 ? "bg-[#c1ccd7] text-[#f9844f]" : "")}>{c}</div>
        ))}
      </div>
    </div>
    <div className="mt-[11px] flex justify-end gap-2.5 pr-2.5 text-white">
      <div className="flex h-[22px] w-[55px] items-center justify-center rounded-[2px] bg-[#0d1526]">Cancel</div>
      <div className="flex h-[22px] w-[55px] items-center justify-center rounded-[2px] bg-[#0a609c]">Ok</div>
    </div>
  </div>
);

/* ---------- taskbar ---------- */

const tasks: { icon: React.ReactNode; label: string; active?: boolean }[] = [
  { icon: <FF />, label: "Edit Projec...", active: true },
  { icon: <Cmd />, label: "C:\\WINDO..." },
  { icon: <Folder />, label: "\\\\Hzhwd01..." },
  { icon: <FolderLens />, label: "C:\\FWx\\no..." },
  { icon: <IE />, label: "Meeting Ro..." },
  { icon: <Notepad />, label: "C:\\FWx\\no..." },
  { icon: <Glyph ch="O" bg="#e34a33" size={12} />, label: "State Stree..." },
  { icon: <Note />, label: "TODOLIST -..." },
  { icon: <Folder />, label: "C:\\Docume..." },
  { icon: <Feather />, label: "Adobe Phot..." },
  { icon: <Chat />, label: "Zhang, Fen..." },
  { icon: <IE />, label: "Meeting Ro..." },
  { icon: <Brackets />, label: "C:/FWx/no..." },
  { icon: <PaintCup />, label: "sdfsdfsdf.P..." },
];

const Tray = () => (
  <div className={"flex h-[23px] w-[260px] items-center justify-between px-1 " + sunken}>
    <Glyph ch="O" bg="#f0a020" size={12} />
    <I><rect x="1" y="0" width="14" height="13" fill="#0a2a0a" /><path d="M2 3h12M2 6h12M2 9h12M2 12h12" stroke="#12e812" strokeWidth="2" /></I>
    <I><circle cx="8" cy="8" r="7.500" fill="#5a6672" /><path d="M3 3l5 11 5-11" fill="none" stroke="#f26a3c" strokeWidth="2" /></I>
    <I><circle cx="8" cy="7" r="7" fill="#138a2e" /><path d="M3 7h10M6 4L3 7l3 3M10 4l3 3-3 3" stroke="#fff" fill="none" strokeWidth="1.500" /><path d="M6 13h4l-2 3z" fill="#138a2e" /></I>
    <I><path d="M1 1h14v8c0 4-7 7-7 7s-7-3-7-7z" fill="#9d3448" stroke="#ddd" /><path d="M4 12V4l4 4 4-4v8" stroke="#fff" fill="none" strokeWidth="1.600" /></I>
    <I><circle cx="10" cy="4" r="3" fill="#1f4fb8" /><path d="M2 9c4-4 12-2 12 2s-6 5-12 1z" fill="#2d66d2" /><path d="M1 14l8-6" stroke="#9db8e8" strokeWidth="2" /></I>
    <I><rect width="16" height="16" fill="#1626d8" /><path d="M4 3l8 5-8 5z" fill="#fff" /></I>
    <I><rect x="1" y="0" width="14" height="16" fill="#1d5fb8" /><path d="M4 4h8M4 7h8M4 10h8" stroke="#8fc0f2" /></I>
    <I><circle cx="6" cy="6" r="4.500" fill="#c9c9c9" stroke="#666" /><circle cx="6" cy="6" r="1.600" fill="#444" /><path d="M11 3c3 3 3 8-2 11" fill="none" stroke="#888" strokeWidth="1.500" /></I>
    <I><rect x="1" y="1" width="14" height="14" fill="#fff" stroke="#236" /><path d="M3 13C8 12 7 4 13 3l-2 5z" fill="#2a90d6" /></I>
    <I><circle cx="8" cy="5" r="4.500" fill="#3fae3a" /><path d="M2 16c0-7 12-7 12 0z" fill="#b9c2c9" /></I>
    <span className="pr-1 pl-1">11:21 AM</span>
  </div>
);

const Desktop = () => (
  <div className={"text-[10.500px] leading-none whitespace-nowrap text-black " + ui}>
    <div className="flex h-[21px] items-center border-t border-[#a09d96] bg-[#d4d0c8] pl-2">
      <span className="w-[1550px] text-[12px] font-bold text-[#555]">×</span>
      <I className="h-3.5 w-3.5"><path d="M1 2h14v6c0 8-14 8-14 0z" fill="#666" /><path d="M5 6l3 3 3-3" stroke="#fff" fill="none" strokeWidth="1.600" /></I>
      <Tri className="mr-3 ml-3 text-[#333]" />
      <I><ellipse cx="7" cy="9" rx="5" ry="3" fill="#d98a1f" transform="rotate(-35 7 9)" /><circle cx="12" cy="4" r="2" fill="#c22" /><path d="M3 4l3 4M9 11l4 3" stroke="#555" /></I>
      <div className={"ml-[3px] flex h-5 w-[26px] items-center justify-center " + sunken}><Glyph ch="@" bg="#1fa3e0" size={12} /></div>
      <div className={"ml-1 flex h-5 w-[130px] items-center justify-center " + sunken}>PageRank: unrankable</div>
      <div className={"ml-0.5 flex h-5 grow items-center justify-center " + sunken}>Alexa Rank: unrankable</div>
    </div>
    <div className="flex h-[29px] items-center border-t border-white bg-[#d4d0c8] pb-1 pl-0.5">
      <div className={"flex h-[22px] w-[52px] shrink-0 items-center gap-0.5 pl-0.5 text-[10.500px] font-bold tracking-[-0.4px] " + raised}><WinFlag />Start</div>
      <div className="ml-2.5 flex w-[123px] shrink-0 gap-[7px]"><IE /><Recycle /><FF /><Brackets /><Notepad /></div>
      {tasks.map((t, i) => (
        <div key={i} className={"mr-[3.500px] flex h-[22px] w-[97px] shrink-0 items-center gap-1 pl-1 " + (t.active ? "font-bold tracking-[-0.5px] shadow-[inset_1px_1px_0_#404040,inset_-1px_-1px_0_#fff,inset_2px_2px_0_#808080] " + checker : raised)}>{t.icon}<span>{t.label}</span></div>
      ))}
      <div className="ml-2.5 flex h-[18px] w-[17px] shrink-0 items-center justify-center bg-[#0a246a] text-[9px] text-white">CH</div>
      <div className="ml-2.5 flex h-[20px] w-4 shrink-0 items-center justify-center text-[13px] font-bold text-[#0a246a]">拼</div>
      <div className="grow" />
      <Tray />
    </div>
  </div>
);

/* ---------- Paint window ---------- */

const tools: React.ReactNode[] = [
  <path d="M3 4l4 3 3-5 1 6 3 2-4 1 0 4-4-3-4 2 2-4z" fill="none" stroke="#000" strokeWidth=".8" strokeDasharray="1.500 1" />,
  <rect x="1.500" y="4" width="13" height="9" fill="none" stroke="#000" strokeDasharray="2 1" />,
  <path d="M1 11l7-7h6l-6 8H2z" fill="#f7f08a" stroke="#000" />,
  <g><path d="M4 7l5-4 6 5-6 6z" fill="#1a9a9a" stroke="#000" /><path d="M2 14V6l4-2" stroke="#000" strokeWidth="2" fill="none" /></g>,
  <g><path d="M2 14l8-9 2 2-8 7z" fill="#fff" stroke="#000" strokeWidth=".8" /><path d="M9 4l4-3 2 2-3 4z" fill="#000" /><path d="M1 15h6" stroke="#18b8c8" strokeWidth="2" /></g>,
  <g><circle cx="6.500" cy="6" r="5" fill="#dfe6e8" stroke="#555" strokeWidth="1.200" /><path d="M10 10l5 5" stroke="#1a2fd0" strokeWidth="2.500" /></g>,
  <path d="M5 15l1-4 5-10 2 1-5 10z" fill="#f5dc62" stroke="#000" strokeWidth=".9" />,
  <g><path d="M5 9h6v6H5z" fill="#d8c22a" stroke="#000" /><path d="M7 1h2v8H7z" fill="#e8d838" stroke="#000" strokeWidth=".6" /></g>,
  <g><path d="M6 4l4-3 6 9-4 3z" fill="#1c28c8" stroke="#000" strokeWidth=".8" /><path d="M1 4h4M1 7h4M1 10h4M1 13h2" stroke="#3a56e0" strokeDasharray="1 1" /></g>,
  <text x="8" y="14" fontSize="16" fontWeight="700" textAnchor="middle" fontFamily="Liberation Serif">A</text>,
  <path d="M2 2l12 13" stroke="#000" strokeWidth="1.200" />,
  <path d="M6 1c8 3 3 5 1 7s-1 5 1 7" fill="none" stroke="#000" strokeWidth="1.200" />,
  <rect x="1" y="3" width="14" height="10" fill="#c0c0c0" stroke="#000" />,
  <path d="M5 2h7l-2 8h5v4H2z" fill="#c0c0c0" stroke="#000" />,
  <ellipse cx="8" cy="8" rx="7" ry="4.500" fill="#c0c0c0" stroke="#000" />,
  <rect x="1" y="3" width="14" height="10" rx="3" fill="#c0c0c0" stroke="#000" />,
];

const Shapes = ({ solid = false }: { solid?: boolean }) => (
  <svg viewBox="0 0 34 24" className="h-6 w-[34px]">
    <rect x="0.500" y="1.500" width="27" height="21" fill="#ffff00" stroke="#000" />
    <rect x="17" y="3" width="16" height="14" fill={solid ? "#fff" : "none"} stroke="#000" strokeDasharray="2 1.500" />
    <rect x="4" y="3" width="6" height="15" rx="2.500" fill="#1c28e8" stroke="#000" strokeWidth=".8" />
    <circle cx="14" cy="16" r="4" fill="#f01838" stroke="#fff" strokeWidth=".8" />
    <path d="M21 8l3-3h6v7l-3 3h-6z" fill="#18d838" stroke="#000" strokeWidth=".9" />
    <path d="M21 8h6v7M27 8l3-3" stroke="#000" strokeWidth=".9" fill="none" />
  </svg>
);

const swatches = [
  "bg-[#000000]", "bg-[#808080]", "bg-[#800000]", "bg-[#808000]", "bg-[#008000]", "bg-[#008080]", "bg-[#000080]",
  "bg-[#800080]", "bg-[#808040]", "bg-[#004040]", "bg-[#0080ff]", "bg-[#004080]", "bg-[#8000ff]", "bg-[#804000]",
  "bg-[#ffffff]", "bg-[#c0c0c0]", "bg-[#ff0000]", "bg-[#ffff00]", "bg-[#00ff00]", "bg-[#00ffff]", "bg-[#0000ff]",
  "bg-[#ff00ff]", "bg-[#ffff80]", "bg-[#00ff80]", "bg-[#80ffff]", "bg-[#8080ff]", "bg-[#ff0080]", "bg-[#ff8040]",
];

const Paint = () => (
  <div className={"flex h-[1024px] flex-col bg-[#d4d0c8] text-[10.500px] leading-none " + ui}>
    <div className="flex h-[18px] items-center bg-linear-to-r from-[#808080] to-[#c4c4c4] pr-0.5 pl-1 text-[11px] font-bold tracking-[-0.45px] text-[#d4d0c8]">
      <PaintCup /><span className="grow pl-1">sdfsdfsdf.PNG - Paint</span><WinButtons />
    </div>
    <div className="flex h-[20px] items-center gap-[11px] pl-[5px] text-[11px] tracking-[-0.1px] text-[#808080]">
      {["File", "Edit", "View", "Image", "Colors", "Help"].map((m) => <span key={m}>{m}</span>)}
    </div>
    <div className="flex h-[913px] border-t border-[#808080]">
      <div className="w-[57px] border-r border-white pt-1 pl-[3px]">
        <div className="grid w-[50px] grid-cols-2">
          {tools.map((t, i) => (
            <div key={i} className={"flex h-[25px] items-center justify-center " + (i === 1 ? "shadow-[inset_1px_1px_0_#000,inset_-1px_-1px_0_#fff] " + checker : raised)}>
              <svg viewBox="0 0 16 16" className="size-4">{t}</svg>
            </div>
          ))}
        </div>
        <div className={"mt-1.5 ml-1 flex h-[66px] w-[42px] flex-col items-center " + sunken}>
          <div className="mt-px flex h-[30px] w-10 items-center justify-center bg-[#0a246a]"><Shapes solid /></div>
          <div className="flex h-[33px] w-10 items-center justify-center"><Shapes /></div>
        </div>
      </div>
      <div className="flex grow flex-col">
        <div className="flex h-[896px]">
          <div className="h-[896px] w-[1205px] shrink-0 overflow-hidden border-t-4 border-l-4 border-[#808080]">
            <div className="relative h-[1150px] w-[1920px]">
              <Chrome />
              <div className="flex"><Form /></div>
              <div className="absolute top-[109px] left-0 h-[1041px] w-[1920px] bg-black/60" />
              <LeaderDialog />
            </div>
          </div>
          <VScroll className="h-[895px]" thumb="h-[638px]" />
        </div>
        <div className={"flex h-4 w-[1205px] " + checker}>
          <div className={"flex w-4 items-center justify-center " + raised}><Tri dir="l" /></div>
          <div className={"w-[441px] " + raised} />
          <div className="grow" />
          <div className={"flex w-4 items-center justify-center " + raised}><Tri dir="r" /></div>
        </div>
      </div>
    </div>
    <div className="flex h-[48px] border-t border-white pt-[7px] pl-px">
      <div className={"relative h-8 w-[30px] " + checker + " " + sunken}>
        <div className="absolute top-[13px] left-[11px] size-3.5 border-2 border-[#d4d0c8] bg-white" />
        <div className="absolute top-1.5 left-1 size-3.5 border-2 border-[#d4d0c8] bg-black" />
      </div>
      <div className="grid w-[225px] grid-cols-14 content-start">
        {swatches.map((s) => (
          <div key={s} className={"size-[15.500px] border border-t-2 border-l-2 border-[#e9e7e2] border-t-[#555] border-l-[#555] " + s} />
        ))}
      </div>
    </div>
    <div className="flex grow items-center gap-0.5 border-t border-[#808080] pt-1">
      <div className={"flex h-5 grow items-center pl-0.5 " + sunken}>For Help, click Help Topics on the Help Menu.</div>
      <div className={"h-5 w-[117px] " + sunken} />
      <div className={"h-5 w-[117px] " + sunken} />
    </div>
  </div>
);

export default function App() {
  return (
    <div className="flex h-[1200px] w-[3200px] overflow-hidden bg-black">
      <div className="relative h-[1200px] w-[1920px] shrink-0 overflow-hidden">
        <Chrome />
        <div className="flex h-[1041px]">
          <Form />
          <VScroll className="h-[1041px]" before="h-[124px]" thumb="h-[520px]" />
        </div>
        <Desktop />
        <div className="absolute top-[1067px] left-[1430px] flex h-[33px] w-[34px] items-center justify-center bg-[#b5b5b5]">
          <svg viewBox="0 0 16 12" className="h-3 w-4"><path d="M2 10l6-7 6 7" fill="none" stroke="#fff" strokeWidth="3.200" /></svg>
        </div>
      </div>
      <div className="w-[1280px] pt-[176px]"><Paint /></div>
    </div>
  );
}
